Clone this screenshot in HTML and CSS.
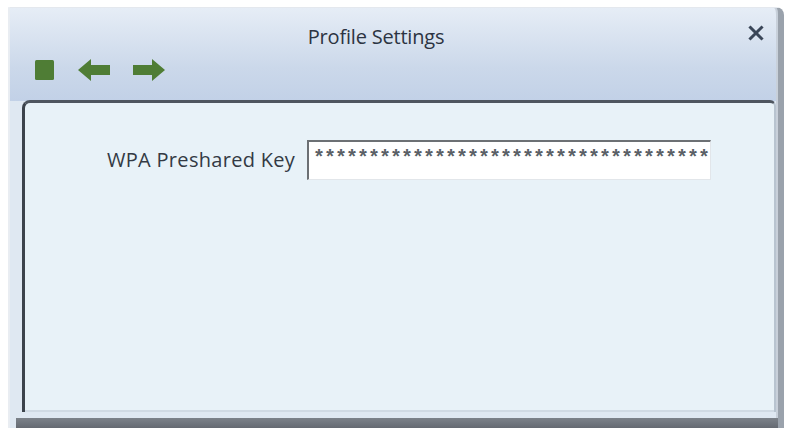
FILE: index.html
```html
<!DOCTYPE html>
<html>
<head>
<meta charset="utf-8">
<link rel="stylesheet" href="styles.css">
</head>
<body>
<div class="window">
  <div class="titlebar">
    <div class="title-row">
      <span></span>
      <span class="title">Profile Settings</span>
      <span class="close">
        <svg width="16" height="16" viewBox="0 0 16 16"><path d="M2.5 2.5 L13.5 13.5 M13.5 2.5 L2.5 13.5" stroke="#3a4658" stroke-width="3" stroke-linecap="square"/></svg>
      </span>
    </div>
    <div class="toolbar">
      <svg class="tb stop" width="19" height="20" viewBox="0 0 19 20"><rect x="0" y="0" width="19" height="20" rx="1.5" fill="#4f7d35"/></svg>
      <svg class="tb back" width="33" height="22" viewBox="0 0 33 22"><path d="M0 11 L13 0 L13 6 L32 6 L32 16 L13 16 L13 22 Z" fill="#4f7d35"/></svg>
      <svg class="tb fwd" width="33" height="22" viewBox="0 0 33 22"><path d="M33 11 L20 0 L20 6 L1 6 L1 16 L20 16 L20 22 Z" fill="#4f7d35"/></svg>
    </div>
  </div>
  <div class="panel-wrap">
    <div class="panel">
      <div class="field-row">
        <label class="label">WPA Preshared Key</label>
        <div class="input"><span class="stars">************************************</span></div>
      </div>
    </div>
  </div>
  <div class="bottom"></div>
</div>
</body>
</html>
```
FILE: styles.css
```css
html, body {
  margin: 0;
  padding: 0;
  background: #ffffff;
  width: 792px;
  height: 437px;
  overflow: hidden;
}
body {
  font-family: "Open Sans", "DejaVu Sans", sans-serif;
}
.window {
  margin: 7px 0 0 8px;
  width: 776px;
  height: 421px;
  display: flex;
  flex-direction: column;
  background: linear-gradient(#e6edf6 0px, #cbd8ea 60px, #c2d1e7 93px, #dfe8f2 93px, #dfe8f2 100%);
  border-left: 2px solid #e9edf2;
  border-top: 1px solid #e4e8ee;
  border-right: 6px solid #9aa2ac;
  border-top-right-radius: 8px;
  box-sizing: border-box;
  box-shadow: inset -2px 0 0 #c8d0da;
}
.titlebar {
  height: 92px;
  display: flex;
  flex-direction: column;
}
.title-row {
  display: grid;
  grid-template-columns: 1fr auto 1fr;
  align-items: center;
  padding-top: 14px;
  padding-right: 36px;
  height: 28px;
}
.title {
  font-size: 20px;
  color: #2c3442;
  letter-spacing: -0.2px;
}
.close {
  justify-self: end;
  margin-right: -22px;
  display: flex;
  margin-top: -6px;
}
.toolbar {
  display: flex;
  align-items: center;
  padding-left: 25px;
  margin-top: 8px;
  height: 24px;
}
.tb.back { margin-left: 24px; }
.tb.fwd { margin-left: 21px; }
.panel-wrap {
  flex: 1;
  padding: 0 2px 0 12px;
  display: flex;
}
.panel {
  flex: 1;
  background: #e8f2f8;
  border-top: 3px solid #4e5660;
  border-left: 3px solid #3c434c;
  border-right: 2px solid #b8c4d0;
  border-top-left-radius: 8px;
  border-top-right-radius: 6px;
  box-shadow: inset 0 -2px 0 #d0dae4;
  margin-bottom: 6px;
}
.field-row {
  display: flex;
  align-items: center;
  padding-top: 37px;
  padding-left: 82px;
}
.label {
  font-size: 20px;
  color: #333a44;
  letter-spacing: 0.3px;
  width: 200px;
  margin-top: -1px;
}
.input {
  width: 401px;
  height: 37px;
  background: #ffffff;
  border-top: 2px solid #6c7074;
  border-left: 2px solid #6c7074;
  border-right: 1px solid #e2e6ea;
  border-bottom: 1px solid #e2e6ea;
  overflow: hidden;
  white-space: nowrap;
  box-sizing: content-box;
}
.stars {
  display: block;
  font-family: "Liberation Mono", monospace;
  font-size: 20px;
  font-weight: bold;
  line-height: 20px;
  letter-spacing: -1px;
  color: #5a6066;
  padding: 7px 0 0 4px;
}
.bottom {
  height: 10px;
  background: linear-gradient(#7c828a, #656a72);
  margin-left: 6px;
}
```
